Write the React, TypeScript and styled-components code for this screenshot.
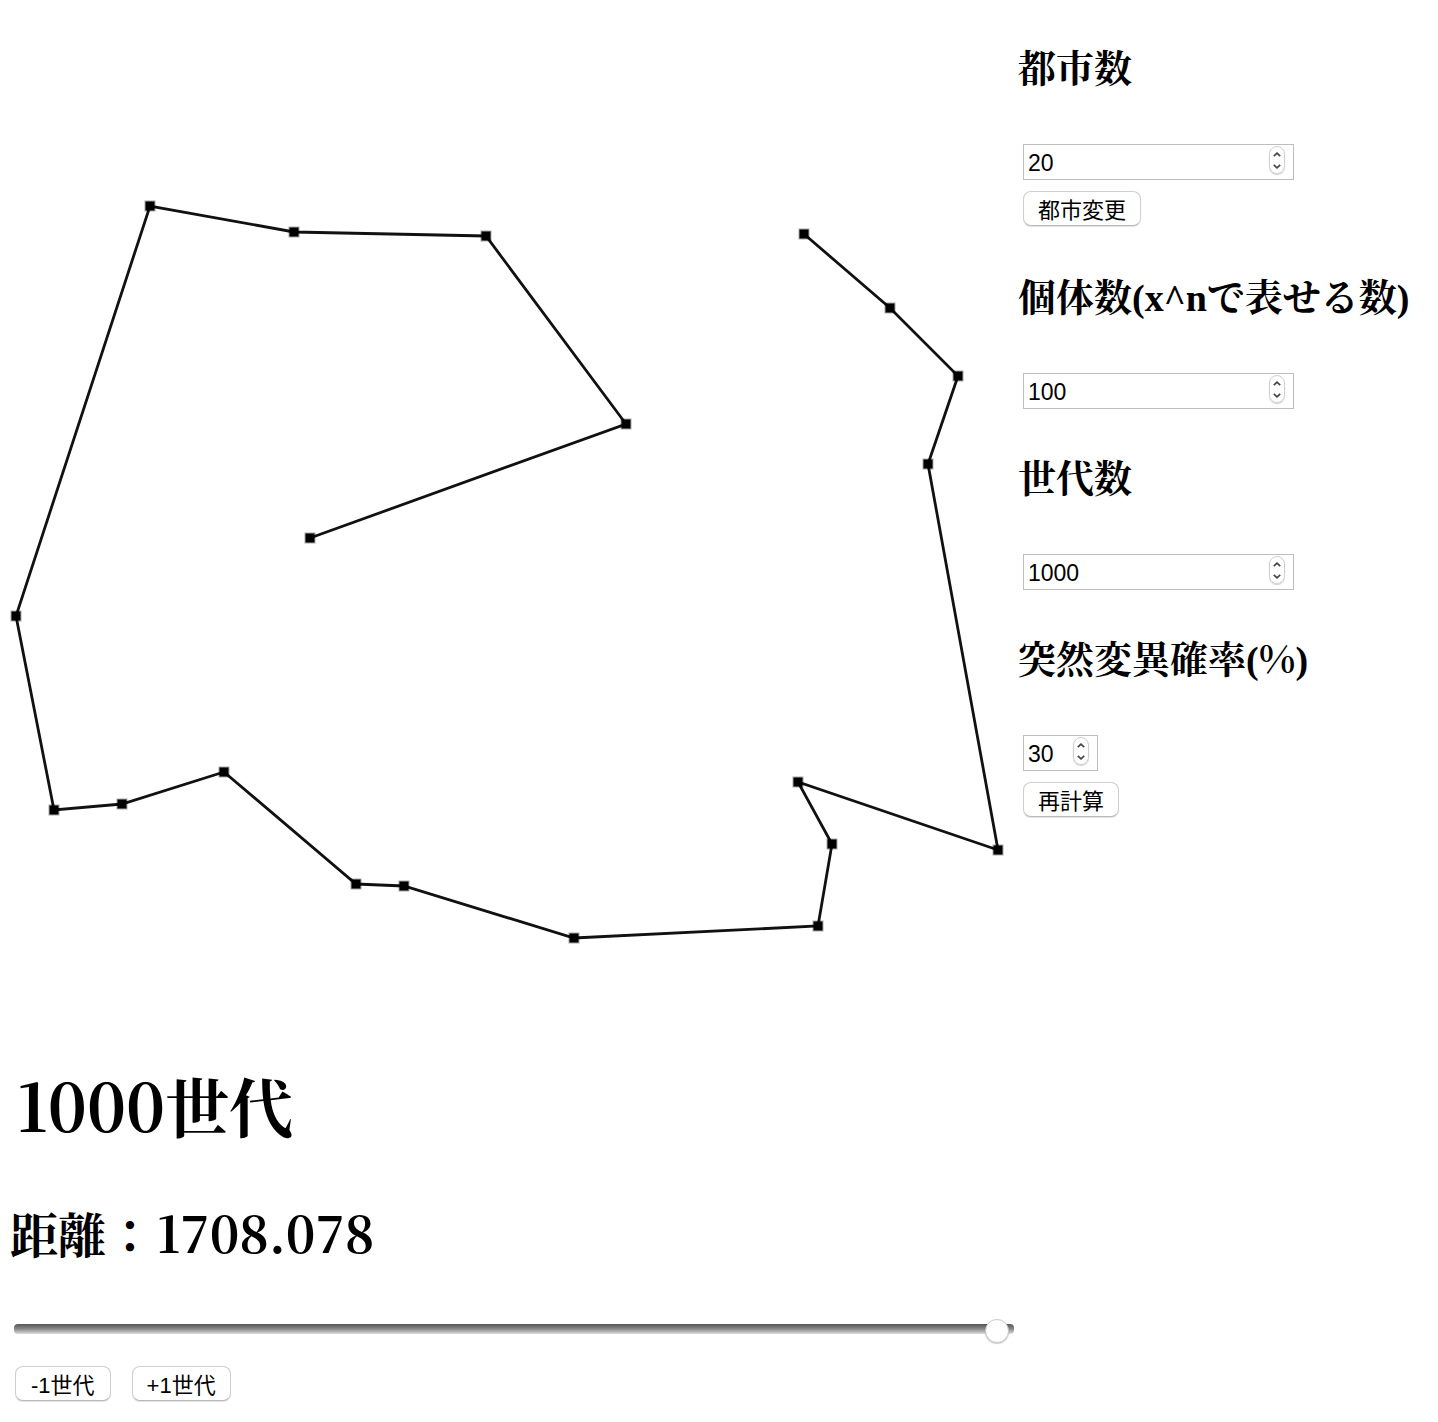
import { useState } from "react";
import type { ReactNode } from "react";
import styled, { createGlobalStyle } from "styled-components";

const serif = `"Noto Serif CJK JP", "Liberation Serif", "Noto Sans CJK JP", serif`;
const latinSerif = `"Liberation Serif", "Noto Serif CJK JP", "Noto Sans CJK JP", serif`;
const sans = `"Liberation Sans", "Noto Sans CJK JP", sans-serif`;

const GlobalStyle = createGlobalStyle`
  *, *::before, *::after { box-sizing: border-box; }
  body { margin: 0; background: #fff; color: #000; font-family: ${serif}; }
`;

const Page = styled.main`
  display: grid;
  grid-template-columns: minmax(0, 1fr) 420px;
  align-items: start;
  padding-bottom: 20px;
`;

const MapColumn = styled.section`
  display: flex;
  flex-direction: column;
`;

const TourMap = styled.svg`
  display: block;
  width: 100%;
  height: auto;
`;

const Generation = styled.h1`
  margin: 0 0 45px;
  padding-left: 14px;
  font-size: 64px;
  line-height: 96px;
`;

const Distance = styled.h2`
  margin: 0 0 55px;
  padding-left: 10px;
  font-size: 48px;
  line-height: 72px;
`;

const Digits = styled.span<{ $size: number }>`
  margin-left: 3px;
  font-size: ${(p) => p.$size}px;
  line-height: 1;
`;

const Slider = styled.input`
  appearance: none;
  display: block;
  height: 10px;
  margin: 0 4px 32px 14px;
  padding: 0 5px;
  border-radius: 4px;
  background: linear-gradient(#555, #8a8a8a 50%, #ddd);

  &::-webkit-slider-runnable-track {
    height: 10px;
  }

  &::-webkit-slider-thumb {
    appearance: none;
    width: 24px;
    height: 24px;
    margin-top: -5px;
    border: 1px solid #c8c8c8;
    border-radius: 50%;
    background: #fff;
    box-shadow: 0 1px 1px rgba(0, 0, 0, 0.2);
  }
`;

const StepRow = styled.div`
  display: flex;
  gap: 21px;
  padding-left: 15px;
`;

const Button = styled.button<{ $inset?: number }>`
  height: 35px;
  padding: 4px ${(p) => p.$inset ?? 14}px 0;
  border: 1px solid #cfcfcf;
  border-bottom-color: #b8b8b8;
  border-radius: 8px;
  background: #fff;
  box-shadow: 0 1px 1px rgba(0, 0, 0, 0.12);
  color: #000;
  font: 22px/29px ${sans};
  white-space: nowrap;
`;

const Settings = styled.form`
  display: flex;
  flex-direction: column;
  gap: 44px;
  padding-top: 43px;
`;

const Field = styled.section`
  display: flex;
  flex-direction: column;
  align-items: flex-start;
`;

const FieldTitle = styled.h3`
  height: 52px;
  margin: 0 0 49px;
  font-family: ${latinSerif};
  font-size: 38px;
  line-height: 52px;
  white-space: nowrap;
`;

const Unit = styled.span`
  font-family: ${serif};
  line-height: 1;
`;

const NumberBox = styled.div<{ $width: number }>`
  display: flex;
  align-items: flex-start;
  width: ${(p) => p.$width}px;
  height: 36px;
  margin-left: 5px;
  padding-right: 8px;
  border: 1px solid #bdbdbd;
  background: #fff;
`;

const NumberInput = styled.input`
  appearance: textfield;
  flex: 1;
  min-width: 0;
  height: 34px;
  padding: 2px 0 0 4px;
  border: 0;
  outline: 0;
  background: transparent;
  color: #000;
  font: 23px ${sans};

  &::-webkit-inner-spin-button {
    appearance: none;
    margin: 0;
  }
`;

const Stepper = styled.div`
  display: flex;
  flex-direction: column;
  width: 16px;
  height: 28px;
  margin-top: 1px;
  padding: 1px 0;
  border: 1px solid #cfcfcf;
  border-radius: 8px;
  box-shadow: 0 1px 1px rgba(0, 0, 0, 0.2);
`;

const StepButton = styled.button`
  display: flex;
  flex: 1;
  align-items: center;
  justify-content: center;
  padding: 0;
  border: 0;
  background: transparent;
`;

const Action = styled.div`
  margin: 11px 0 2px 5px;
`;

const cities: [number, number][] = [
  [310, 538], [626, 424], [486, 236], [294, 232], [150, 206],
  [16, 616], [54, 810], [122, 804], [224, 772], [356, 884],
  [404, 886], [574, 938], [818, 926], [832, 844], [798, 782],
  [998, 850], [928, 464], [958, 376], [890, 308], [804, 234],
];

type FieldProps = {
  id: string;
  title: ReactNode;
  initial: number;
  width?: number;
  action?: string;
};

function Chevron({ up }: { up?: boolean }) {
  return (
    <svg width="8" height="5" viewBox="0 0 8 5" aria-hidden="true">
      <path
        d={up ? "M0.8 4.2 4 1.2 7.2 4.2" : "M0.8 0.8 4 3.8 7.2 0.8"}
        fill="none"
        stroke="#444"
        strokeWidth="1.7"
      />
    </svg>
  );
}

function NumberField({ id, title, initial, width = 271, action }: FieldProps) {
  const [value, setValue] = useState(initial);
  return (
    <Field>
      <FieldTitle>
        <label htmlFor={id}>{title}</label>
      </FieldTitle>
      <NumberBox $width={width}>
        <NumberInput
          id={id}
          type="number"
          value={value}
          onChange={(e) => setValue(Number(e.target.value))}
        />
        <Stepper>
          <StepButton type="button" aria-label="増やす" onClick={() => setValue(value + 1)}>
            <Chevron up />
          </StepButton>
          <StepButton type="button" aria-label="減らす" onClick={() => setValue(value - 1)}>
            <Chevron />
          </StepButton>
        </Stepper>
      </NumberBox>
      {action && (
        <Action>
          <Button type="button">{action}</Button>
        </Action>
      )}
    </Field>
  );
}

export default function App() {
  const [generation, setGeneration] = useState(1000);
  const move = (n: number) => setGeneration(Math.min(1000, Math.max(0, n)));

  return (
    <>
      <GlobalStyle />
      <Page>
        <MapColumn>
          <TourMap viewBox="0 0 1018 1056" role="img" aria-label="巡回経路">
            <polyline
              points={cities.map((c) => c.join(",")).join(" ")}
              fill="none"
              stroke="#111"
              strokeWidth="2.8"
            />
            {cities.map(([x, y]) => (
              <rect
                key={`${x}-${y}`}
                x={x - 4.5}
                y={y - 4.5}
                width="9"
                height="9"
                stroke="#000"
                strokeOpacity="0.35"
                strokeWidth="2"
              />
            ))}
          </TourMap>
          <Generation>
            <Digits $size={66}>{generation}</Digits>世代
          </Generation>
          <Distance>
            距離：<Digits $size={50}>1708.078</Digits>
          </Distance>
          <Slider
            type="range"
            min={0}
            max={1000}
            value={generation}
            aria-label="世代"
            onChange={(e) => move(Number(e.target.value))}
          />
          <StepRow>
            <Button type="button" $inset={15} onClick={() => move(generation - 1)}>-1世代</Button>
            <Button type="button" onClick={() => move(generation + 1)}>+1世代</Button>
          </StepRow>
        </MapColumn>
        <Settings>
          <NumberField id="cities" title="都市数" initial={20} action="都市変更" />
          <NumberField id="population" title="個体数(x^nで表せる数)" initial={100} />
          <NumberField id="generations" title="世代数" initial={1000} />
          <NumberField
            id="mutation"
            title={<>突然変異確率(<Unit>%</Unit>)</>}
            initial={30}
            width={75}
            action="再計算"
          />
        </Settings>
      </Page>
    </>
  );
}
